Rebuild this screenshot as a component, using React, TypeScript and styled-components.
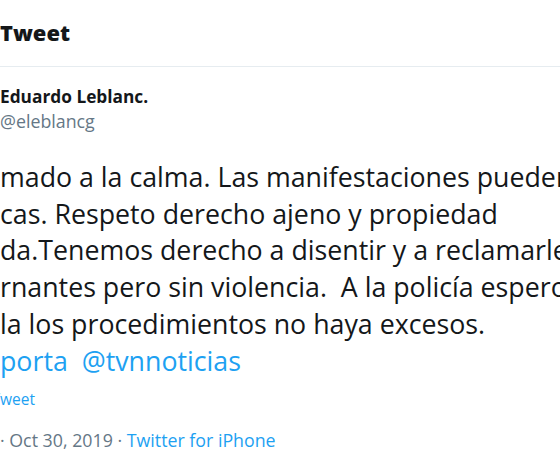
import React from "react";
import styled, { createGlobalStyle } from "styled-components";

const GlobalStyle = createGlobalStyle`
  html, body { margin: 0; padding: 0; background: #ffffff; }
  body {
    font-family: "Open Sans", "Noto Sans", sans-serif;
    color: #14171a;
    overflow: hidden;
  }
`;

/* The picture is a crop of a wider tweet page: the left gutter
   (back button, avatar, start of each text line) lies outside the view. */
const Viewport = styled.main`
  width: 560px;
  height: 472px;
  overflow: hidden;
`;

const Page = styled.article`
  margin-left: -70px;
  width: 760px;
`;

const Header = styled.header`
  height: 66px;
  border-bottom: 1px solid #e6ecf0;
  display: grid;
  grid-template-columns: 70px 1fr;
  align-items: center;
`;

const BackButton = styled.button`
  width: 39px;
  height: 39px;
  margin-left: 8px;
  padding: 0;
  border: 0;
  border-radius: 50%;
  background: transparent;
  color: #1da1f2;
  display: flex;
  align-items: center;
  justify-content: center;
`;

const Title = styled.h2`
  margin: 0;
  font-size: 21.9px;
  font-weight: 800;
  line-height: 26px;
  color: #14171a;
`;

const Author = styled.div`
  display: grid;
  grid-template-columns: 70px 1fr;
  align-items: center;
  padding-top: 17px;
`;

const Avatar = styled.div`
  width: 49px;
  height: 49px;
  margin-left: 11px;
  border-radius: 50%;
  background: #ccd6dd;
`;

const Names = styled.div`
  display: flex;
  flex-direction: column;
`;

const Name = styled.span`
  font-size: 17.3px;
  font-weight: 700;
  line-height: 24px;
  color: #14171a;
`;

const Handle = styled.span`
  font-size: 17.8px;
  line-height: 24px;
  color: #657786;
`;

const Body = styled.p`
  margin: 26px 0 0;
  font-size: 26.75px;
  line-height: 36.7px;
  color: #14171a;
`;

const Line = styled.span`
  display: flex;
  white-space: pre;
`;

/* The part of a line that falls in the hidden gutter, right-aligned to its edge. */
const Cut = styled.span`
  flex: 0 0 70px;
  min-width: 0;
  display: flex;
  justify-content: flex-end;
  white-space: pre;
`;

const Rest = styled.span`
  flex: none;
  white-space: pre;
`;

const Mention = styled.a`
  color: #1da1f2;
  text-decoration: none;
`;

const Translate = styled.div`
  margin-top: 10px;
  font-size: 15.5px;
  line-height: 20px;
  color: #1da1f2;
`;

const Meta = styled.div`
  margin-top: 19px;
  font-size: 17.8px;
  line-height: 24px;
  color: #657786;
`;

const Source = styled.a`
  color: #1da1f2;
  text-decoration: none;
`;

const lines: [string, string][] = [
  ["Un lla", "mado a la calma. Las manifestaciones pueden ser"],
  ["pacífi", "cas. Respeto derecho ajeno y propiedad"],
  ["priva", "da.Tenemos derecho a disentir y a reclamarle"],
  ["a gobe", "rnantes pero sin violencia.  A la policía espero que"],
  ["en ", "la los procedimientos no haya excesos."],
];

export default function App() {
  return (
    <>
      <GlobalStyle />
      <Viewport>
        <Page>
          <Header>
            <BackButton aria-label="Back">
              <svg width="22" height="22" viewBox="0 0 24 24" fill="currentColor">
                <path d="M20 11H7.414l4.293-4.293a1 1 0 0 0-1.414-1.414l-6 6a1 1 0 0 0 0 1.414l6 6a1 1 0 0 0 1.414-1.414L7.414 13H20a1 1 0 1 0 0-2z" />
              </svg>
            </BackButton>
            <Title>Tweet</Title>
          </Header>

          <Author>
            <Avatar />
            <Names>
              <Name>Eduardo Leblanc.</Name>
              <Handle>@eleblancg</Handle>
            </Names>
          </Author>

          <Body>
            {lines.map(([hidden, visible]) => (
              <Line key={visible}>
                <Cut>
                  <Rest>{hidden}</Rest>
                </Cut>
                <Rest>{visible}</Rest>
              </Line>
            ))}
            <Line>
              <Cut>
                <Rest>
                  <Mention>@TRe</Mention>
                </Rest>
              </Cut>
              <Rest>
                <Mention>porta</Mention>
                {"  "}
                <Mention>@tvnnoticias</Mention>
              </Rest>
            </Line>
          </Body>

          <Translate>
            <Line>
              <Cut>
                <Rest>Translate T</Rest>
              </Cut>
              <Rest>weet</Rest>
            </Line>
          </Translate>

          <Meta>
            <Line>
              <Cut>
                <Rest>10:58 PM </Rest>
              </Cut>
              <Rest>
                · Oct 30, 2019 · <Source>Twitter for iPhone</Source>
              </Rest>
            </Line>
          </Meta>
        </Page>
      </Viewport>
    </>
  );
}
